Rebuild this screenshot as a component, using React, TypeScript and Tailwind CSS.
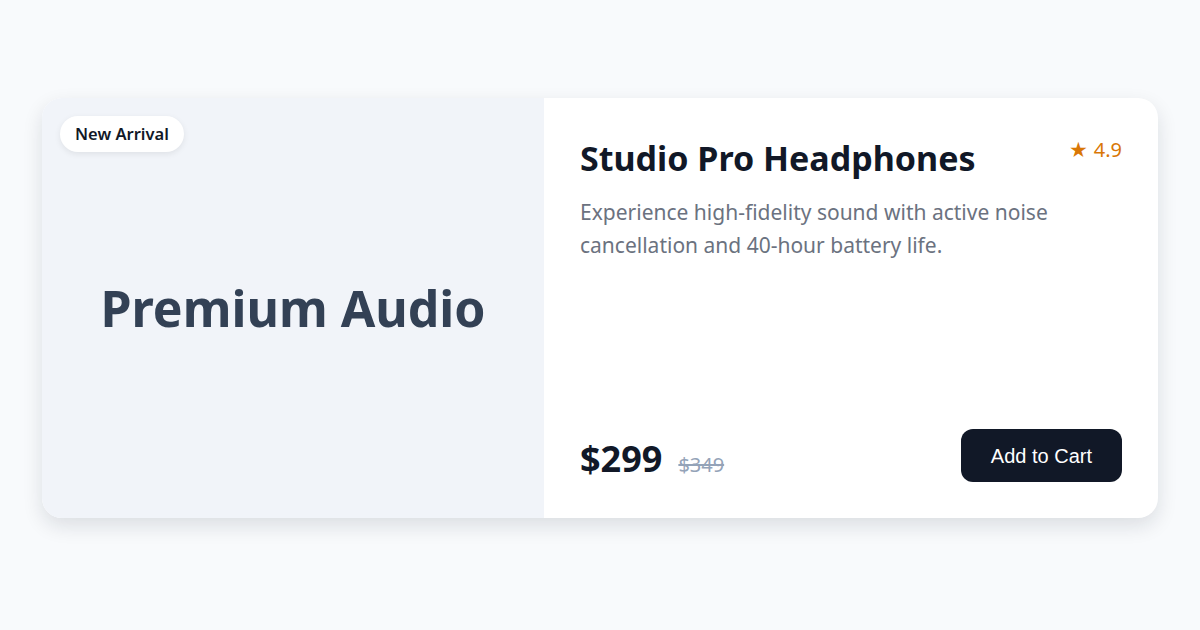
export default function App() {
  return (
    <div className="w-[1200px] h-[630px] bg-[#f8fafc] px-[42px] pt-[98px] font-['Noto_Sans',sans-serif]">
      <div className="flex h-[420px] rounded-[20px] bg-white shadow-[0_8px_20px_rgba(15,23,42,0.12)] overflow-hidden">
        {/* Image side */}
        <div className="relative w-[502px] shrink-0 bg-[#f1f4f9] flex items-center justify-center">
          <span className="absolute top-[18px] left-[18px] rounded-full bg-white px-[15px] h-9 flex items-center text-[16.5px] font-semibold text-[#111827] shadow-[0_2px_6px_rgba(0,0,0,0.08)]">
            New Arrival
          </span>
          <h2 className="text-[50px] font-bold text-[#334155] leading-none">Premium Audio</h2>
        </div>

        {/* Details */}
        <div className="flex-1 flex flex-col justify-between p-9">
          <div>
            <div className="flex items-start justify-between">
              <h1 className="text-[34px] font-bold text-[#111827] leading-[1.2] pt-[4px]">
                Studio Pro Headphones
              </h1>
              <div className="flex items-center gap-[6px] text-[20px] text-[#d97706] leading-none pt-[5px]">
                <span className="text-[21px]">★</span>
                <span>4.9</span>
              </div>
            </div>
            <p className="mt-[17px] text-[21px] leading-[33px] text-[#6b7280] max-w-[520px]">
              Experience high-fidelity sound with active noise cancellation and 40-hour battery life.
            </p>
          </div>

          <div className="flex items-end justify-between">
            <div className="flex items-baseline gap-4 pb-[2px]">
              <span className="text-[36px] font-bold text-[#111827] leading-none">$299</span>
              <span className="text-[20px] text-[#94a3b8] line-through">$349</span>
            </div>
            <button className="h-[53px] px-[30px] rounded-xl bg-[#111827] text-white text-[20px] font-['Liberation_Sans',Arial,sans-serif]">
              Add to Cart
            </button>
          </div>
        </div>
      </div>
    </div>
  );
}
